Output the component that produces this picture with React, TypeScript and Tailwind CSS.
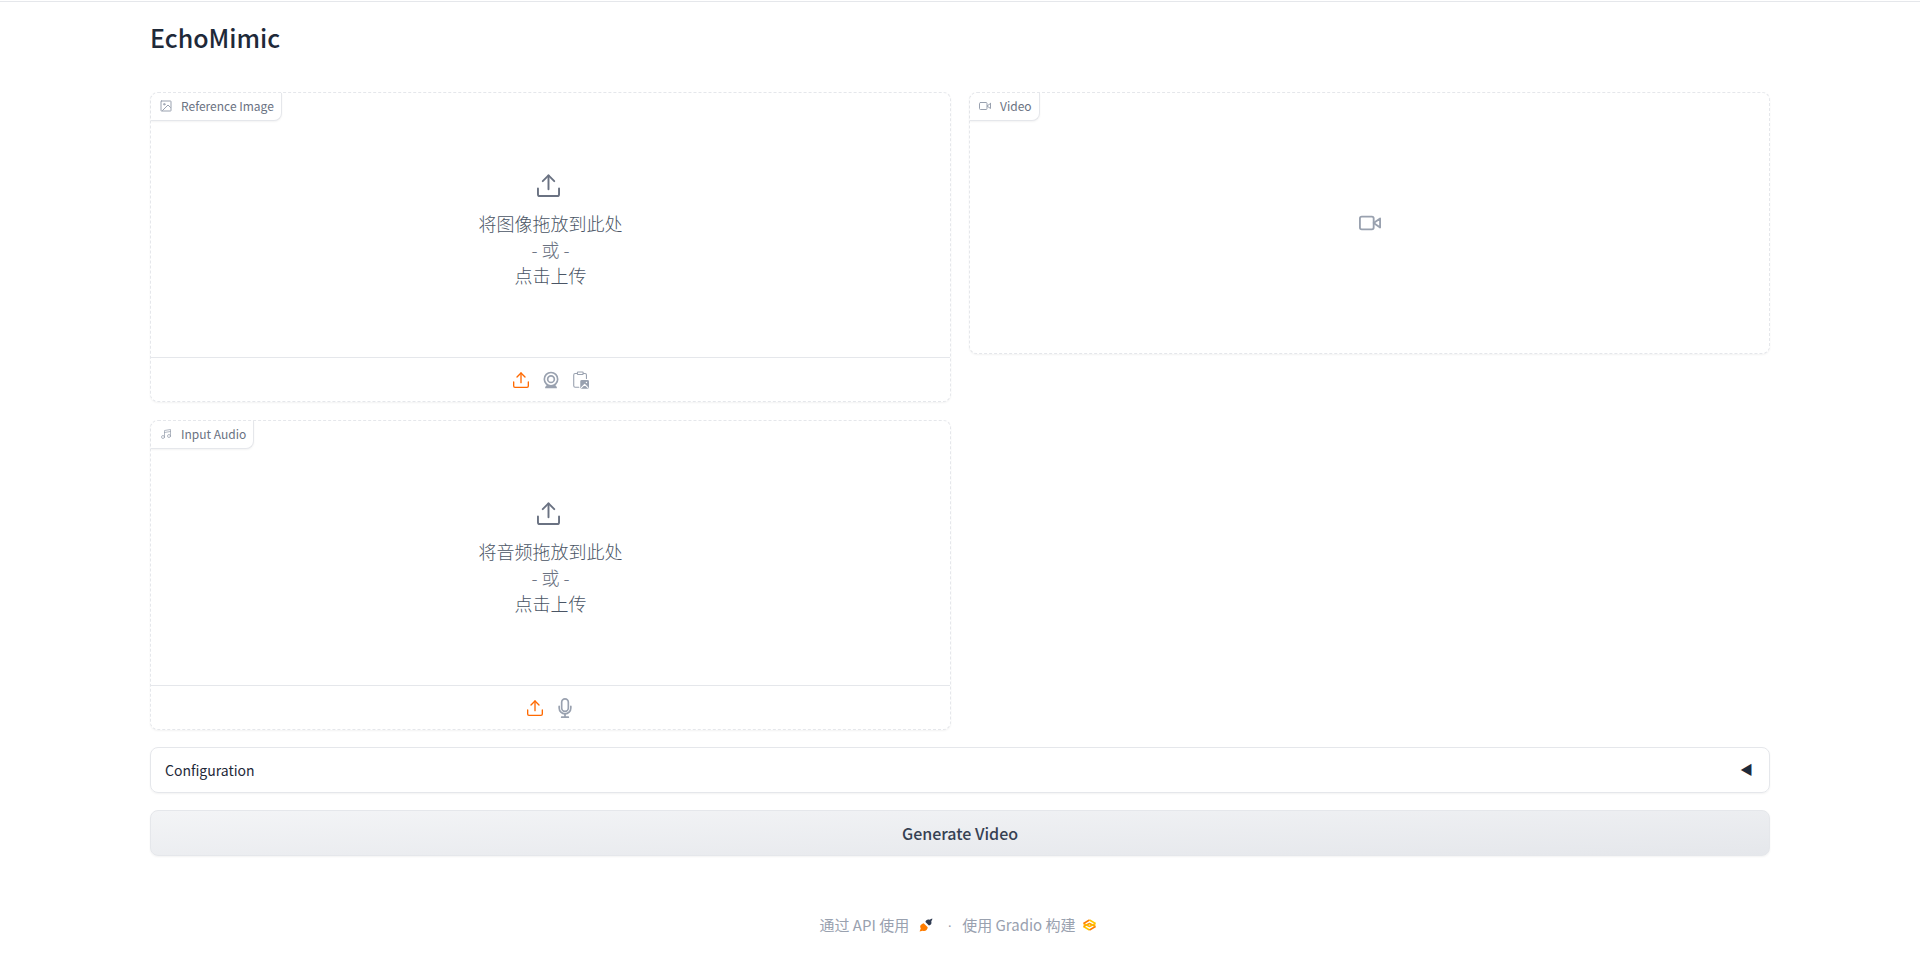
import type { ReactNode } from "react";

type IconProps = {
  className?: string;
};

function UploadIcon({ className }: IconProps) {
  return (
    <svg className={className} viewBox="0 0 24 24" fill="none" stroke="currentColor" strokeWidth="2" strokeLinecap="round" strokeLinejoin="round" aria-hidden="true">
      <path d="M1 15v6a2 2 0 0 0 2 2h18a2 2 0 0 0 2-2v-6" />
      <path d="M12 16V1.500" />
      <path d="M6 7.500l6-6 6 6" />
    </svg>
  );
}

function ImageIcon({ className }: IconProps) {
  return (
    <svg className={className} viewBox="0 0 24 24" fill="none" stroke="currentColor" strokeWidth="2" strokeLinecap="round" strokeLinejoin="round" aria-hidden="true">
      <rect x="2" y="2" width="20" height="20" rx="1" />
      <circle cx="8.500" cy="8.500" r="1.500" />
      <path d="M21 15l-5-5L5 21" />
    </svg>
  );
}

function VideoIcon({ className }: IconProps) {
  return (
    <svg className={className} viewBox="0 0 24 24" fill="none" stroke="currentColor" strokeWidth="2" strokeLinecap="round" strokeLinejoin="round" aria-hidden="true">
      <path d="M23 7l-7 5 7 5V7z" />
      <rect x="1" y="5" width="15" height="14" rx="2" />
    </svg>
  );
}

function MusicIcon({ className }: IconProps) {
  return (
    <svg className={className} viewBox="0 0 24 24" fill="none" stroke="currentColor" strokeWidth="1.500" strokeLinecap="round" strokeLinejoin="round" aria-hidden="true">
      <path d="M9 18V5l12-2v13" />
      <path d="M9 9l12-2" />
      <circle cx="6" cy="18" r="3" />
      <circle cx="18" cy="16" r="3" />
    </svg>
  );
}

function WebcamIcon({ className }: IconProps) {
  return (
    <svg className={className} viewBox="0 0 24 24" fill="none" stroke="currentColor" strokeWidth="2" aria-hidden="true">
      <circle cx="12" cy="11" r="8" />
      <circle cx="12" cy="11" r="4" />
      <path d="M7 18h10l2 2.500V22H5v-1.500z" fill="currentColor" stroke="none" />
    </svg>
  );
}

function PasteImageIcon({ className }: IconProps) {
  return (
    <svg className={className} viewBox="2 0 22 24" fill="none" stroke="currentColor" strokeWidth="1.500" strokeLinecap="round" strokeLinejoin="round" aria-hidden="true">
      <path d="M10 22H5a2 2 0 0 1-2-2V5a2 2 0 0 1 2-2h3M16 3h2.500a2 2 0 0 1 2 2v5" />
      <rect x="8" y="1" width="8" height="3.500" rx="1" />
      <rect x="12" y="12" width="12" height="12" rx="2" fill="currentColor" stroke="none" />
      <path d="M13.500 22.500l4.500-4.500 4.500 4.500" stroke="white" />
      <circle cx="20.500" cy="15.500" r="1" fill="white" stroke="none" />
    </svg>
  );
}

function MicIcon({ className }: IconProps) {
  return (
    <svg className={className} viewBox="0 0 24 24" fill="none" stroke="currentColor" strokeWidth="2" strokeLinecap="round" strokeLinejoin="round" aria-hidden="true">
      <rect x="8" y="1" width="8" height="15" rx="4" />
      <path d="M19 10v2a7 7 0 0 1-14 0v-2" />
      <path d="M12 19v4M8 23h8" />
    </svg>
  );
}

function ApiIcon({ className }: IconProps) {
  return (
    <svg className={className} viewBox="0 0 24 24" aria-hidden="true">
      <path d="M1 23l2-5c-2-3-1-6 3-8l2-1 7 7c-.5 4.500-4 7.500-8.500 6z" fill="#ff7c00" />
      <path d="M11 7c.5-3 3.500-5.500 7-4l4.500-2L23 1.500 21 6c1.500 3.500-1 6.500-4 7z" fill="#303c53" />
    </svg>
  );
}

function GradioIcon({ className }: IconProps) {
  return (
    <svg className={className} viewBox="0 0 28 24" fill="none" strokeWidth="3" strokeLinejoin="round" aria-hidden="true">
      <path d="M2 15l12 7" stroke="#ffc800" />
      <path d="M14 22l12-7" stroke="#ff7c00" />
      <path d="M2 15l12-6 12 6" stroke="#ff9d00" />
      <path d="M2 9l12 6 12-6" stroke="#ffb800" />
      <path d="M2 9l12-7" stroke="#ff7c00" />
      <path d="M14 2l12 7" stroke="#ffc800" />
    </svg>
  );
}

type BlockProps = {
  label: string;
  icon: ReactNode;
  children: ReactNode;
};

function Block({ label, icon, children }: BlockProps) {
  return (
    <section aria-label={label} className="relative flex flex-col rounded-lg border border-dashed border-gray-200 bg-white shadow-xs">
      <h2 className="absolute top-0 left-0 flex h-7 items-center gap-[9px] rounded-tl-lg rounded-br-lg border-r border-b border-gray-200 bg-white pr-[7px] pb-px pl-[9px] text-xs text-gray-500 shadow-xs">
        <span className="text-gray-400">{icon}</span>
        {label}
      </h2>
      {children}
    </section>
  );
}

function DropZone({ text }: { text: string }) {
  return (
    <button type="button" className="flex h-[264px] w-full cursor-pointer flex-col items-center pt-[81px] text-[18px] leading-[26px] font-light text-gray-600">
      <UploadIcon className="mr-1 mb-[13px] h-[23px] w-[23px] text-gray-500" />
      <span>{text}</span>
      <span className="text-gray-500">- 或 -</span>
      <span>点击上传</span>
    </button>
  );
}

function SourceBar({ children }: { children: ReactNode }) {
  return (
    <div className="flex h-11 items-center justify-center gap-3 border-t border-gray-200 text-gray-400">{children}</div>
  );
}

export default function App() {
  return (
    <div className="bg-white pt-px font-['Noto_Sans_CJK_SC',sans-serif] text-gray-800">
      <main className="border-t border-gray-200">
        <div className="mx-auto flex w-full max-w-[1684px] flex-col gap-[17px] px-8 pt-[15px]">
          <h1 className="mb-[18px] text-[25px] leading-10 font-medium">EchoMimic</h1>
          <div className="grid grid-cols-2 items-start gap-[18px]">
            <div className="flex flex-col gap-[18px]">
              <Block label="Reference Image" icon={<ImageIcon className="h-3 w-3" />}>
                <DropZone text="将图像拖放到此处" />
                <SourceBar>
                  <button type="button" aria-label="上传" className="text-orange-500"><UploadIcon className="h-4 w-4" /></button>
                  <button type="button" aria-label="摄像头"><WebcamIcon className="h-5 w-5" /></button>
                  <button type="button" aria-label="剪贴板"><PasteImageIcon className="h-[18px] w-4" /></button>
                </SourceBar>
              </Block>
              <Block label="Input Audio" icon={<MusicIcon className="h-3 w-3" />}>
                <DropZone text="将音频拖放到此处" />
                <SourceBar>
                  <button type="button" aria-label="上传" className="text-orange-500"><UploadIcon className="h-4 w-4" /></button>
                  <button type="button" aria-label="麦克风"><MicIcon className="h-5 w-5" /></button>
                </SourceBar>
              </Block>
            </div>
            <Block label="Video" icon={<VideoIcon className="h-3 w-3" />}>
              <div className="flex h-[260px] items-center justify-center text-gray-400">
                <VideoIcon className="h-[22px] w-[22px]" />
              </div>
            </Block>
          </div>
          <button type="button" aria-expanded="false" className="flex h-[46px] w-full items-center justify-between rounded-lg border border-gray-200 pr-4 pb-px pl-[14px] text-sm shadow-xs">
            <span>Configuration</span>
            <span className="text-[13px]">◀</span>
          </button>
          <button type="button" className="h-[46px] w-full rounded-lg border border-gray-200 bg-linear-to-br from-gray-100 to-gray-200 pb-px font-medium text-gray-700 shadow-xs">
            Generate Video
          </button>
          <footer className="mt-10 flex items-center justify-center gap-2.5 pr-1 text-[15px] leading-6 text-gray-400">
            <button type="button" className="flex items-center gap-2.5">
              通过 API 使用
              <ApiIcon className="h-[14px] w-[14px]" />
            </button>
            <span className="pl-1 font-['Liberation_Sans',sans-serif]">·</span>
            <a href="https://gradio.app" className="flex items-center gap-1.5">
              使用 Gradio 构建
              <GradioIcon className="h-3 w-[15px]" />
            </a>
          </footer>
        </div>
      </main>
    </div>
  );
}
